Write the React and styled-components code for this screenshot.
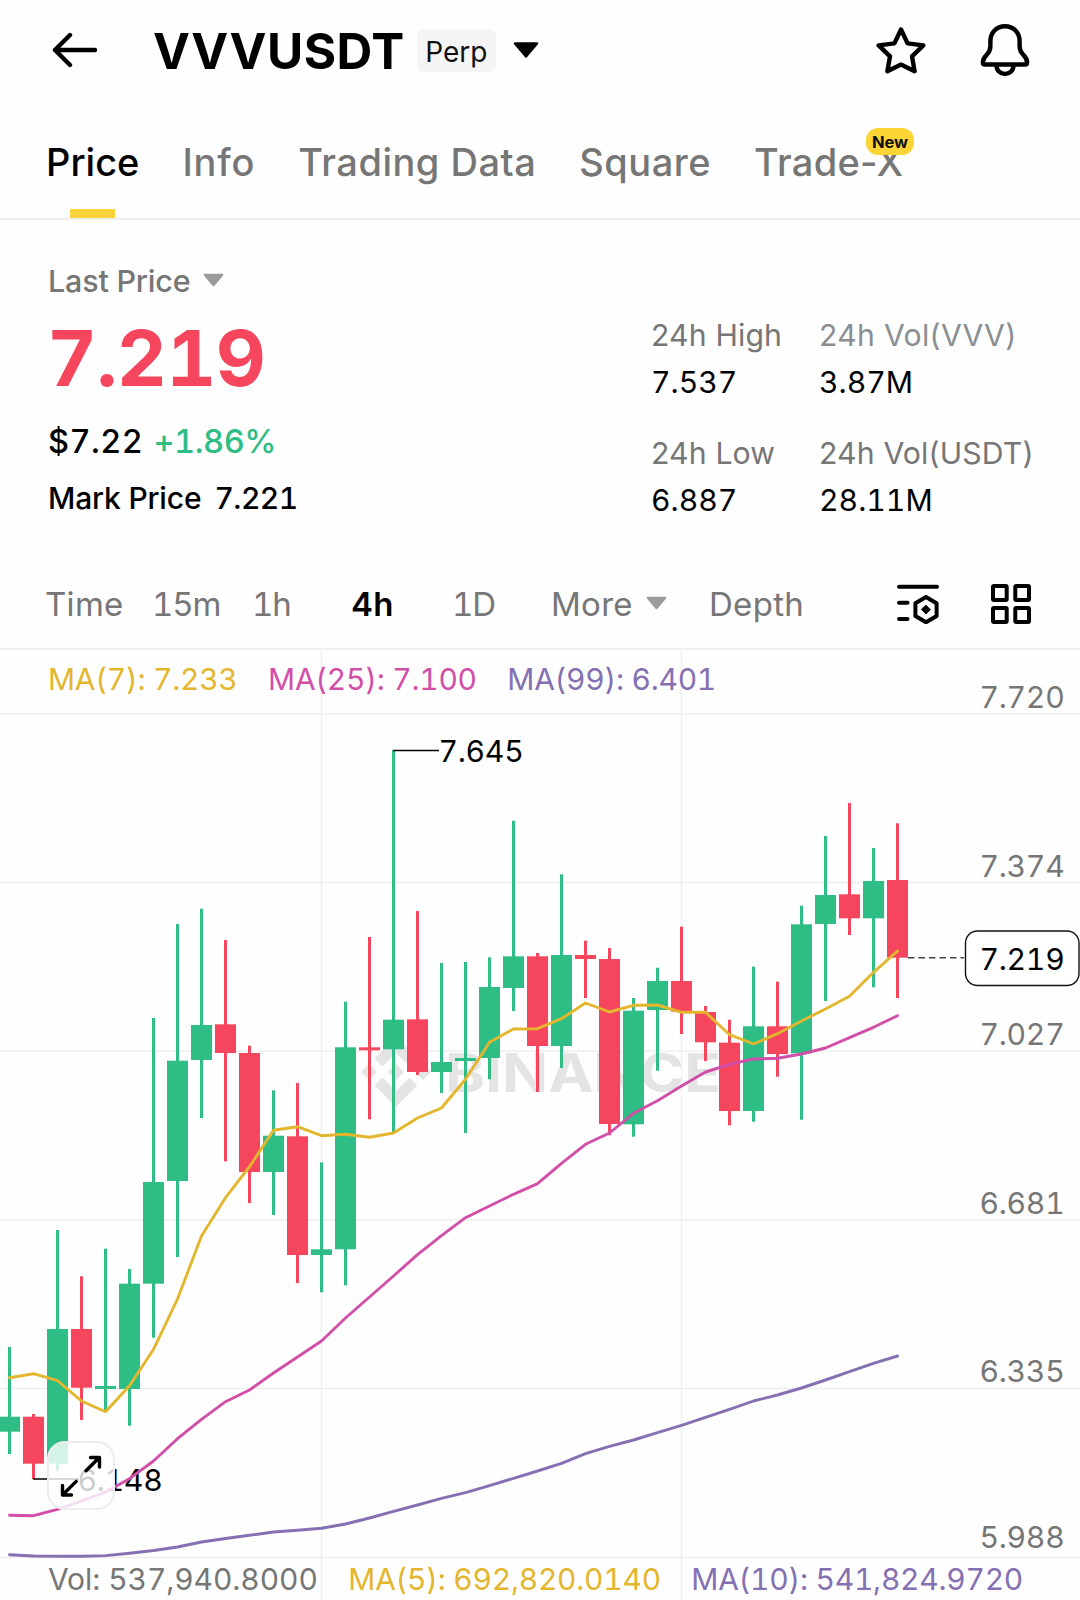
// Import necessary dependencies
import React, { useState } from "react";
import styled, { createGlobalStyle } from "styled-components";
import { SiBinance } from "react-icons/si";

const GlobalStyle = createGlobalStyle`
  * {
    box-sizing: border-box;
  }
  body {
    margin: 0;
    background: #fefefe;
    color: #000;
    font-family: Inter, "Liberation Sans", sans-serif;
    -webkit-font-smoothing: antialiased;
  }
  button {
    font: inherit;
    color: inherit;
    background: none;
    border: none;
    padding: 0;
  }
`;

const UP = "#2ebd85";
const DOWN = "#f6465d";
const YELLOW = "#e3b62e";
const PINK = "#d24fa9";
const PURPLE = "#8470b2";
const GREY = "#767676";

// Candles on the 4h chart: [up, high, body top, body bottom, low]
const candles = [
  [1, 1347, 1416.7, 1431.7, 1454],
  [0, 1414, 1416.7, 1463.7, 1479],
  [1, 1230, 1329, 1463.7, 1470.5],
  [0, 1276.3, 1329, 1387.7, 1420],
  [1, 1248.7, 1386, 1389, 1411.7],
  [1, 1269, 1283.7, 1389, 1425.7],
  [1, 1018, 1182, 1283.7, 1337.7],
  [1, 924, 1060.7, 1181, 1257],
  [1, 908.7, 1025, 1060, 1118],
  [0, 940, 1024.3, 1053, 1161.3],
  [0, 1045.7, 1053, 1172, 1203],
  [1, 1090.3, 1135.7, 1172, 1215],
  [0, 1083, 1136.3, 1255, 1283],
  [1, 1162.3, 1249.3, 1255, 1292.3],
  [1, 1001.7, 1047.3, 1249.3, 1285.3],
  [0, 937, 1047.3, 1050.3, 1119.3],
  [1, 750, 1019.7, 1049.3, 1132.3],
  [0, 911, 1019.3, 1072, 1075],
  [1, 963, 1062, 1072, 1093],
  [1, 962, 1058, 1061, 1133],
  [1, 957.3, 987, 1058, 1079.3],
  [1, 820.7, 956.3, 988, 1011],
  [0, 953, 956.3, 1046, 1092],
  [1, 874.3, 955, 1046, 1068],
  [0, 940.7, 955, 959, 998],
  [0, 948, 959, 1124, 1135.3],
  [1, 998, 1010.7, 1124.3, 1136.7],
  [1, 967.7, 981, 1010, 1070.7],
  [0, 926.7, 981, 1011.7, 1034],
  [0, 1006, 1012, 1042.3, 1061],
  [0, 1019.7, 1042.7, 1111, 1125.3],
  [1, 966.7, 1026.3, 1111, 1121.7],
  [0, 981.7, 1026.3, 1054, 1076.7],
  [1, 905.7, 924.3, 1053.3, 1119.7],
  [1, 836, 895, 924, 1001],
  [0, 803, 894.3, 918.3, 935],
  [1, 848, 881, 918.3, 987.3],
  [0, 823.3, 880, 957.7, 998],
];

const ma7 = [
  1377.7, 1373.7, 1380.7, 1401, 1411.7, 1385.7, 1349.3, 1299, 1236, 1197.7,
  1166.7, 1130.3, 1126.7, 1135.7, 1134.3, 1137.3, 1133, 1118, 1108, 1079.3,
  1042.3, 1029, 1028.7, 1018.7, 1003, 1012, 1005.3, 1005, 1012.3, 1012.3,
  1034.7, 1044, 1033.7, 1021, 1009, 996.3, 972.3, 951,
];

const ma25 = [
  1515.3, 1515.7, 1509.3, 1501, 1492, 1478.7, 1461, 1438.7, 1419.3, 1401.7,
  1390, 1373, 1357, 1341, 1318, 1297, 1276, 1254.7, 1235.7, 1217.7, 1206,
  1194.3, 1183.7, 1163.3, 1144.3, 1133, 1113.3, 1100.7, 1086, 1072, 1064.3,
  1059, 1058.3, 1054, 1048, 1037.7, 1027.3, 1015.7,
];

const ma99 = [
  1554.7, 1556, 1556.3, 1556.3, 1555.6, 1553.3, 1550.5, 1547, 1542, 1538.5,
  1535.3, 1532, 1530.3, 1528.3, 1524, 1518, 1511.3, 1505, 1498.3, 1492.7,
  1485.7, 1478.3, 1471, 1463.3, 1453.7, 1446.3, 1440, 1432.7, 1425.3, 1417.3,
  1409.3, 1401, 1395, 1388, 1380, 1371.7, 1363.3, 1356,
];

const gridLines = [714, 882.5, 1051, 1220, 1388.5, 1557.5];

// Axis label and its baseline
const axisLabels = [
  ["7.720", 708],
  ["7.374", 877],
  ["7.027", 1045],
  ["6.681", 1214],
  ["6.335", 1382],
  ["5.988", 1548],
];

const tabs = [
  { name: "Price", spacing: 0 },
  { name: "Info", spacing: 0.8 },
  { name: "Trading Data", spacing: 0.5 },
  { name: "Square", spacing: 0.5 },
  { name: "Trade-X", spacing: 0.3, badge: "New" },
];

const stats = [
  { label: "24h High", value: "7.537" },
  { label: "24h Vol(VVV)", value: "3.87M", soft: true },
  { label: "24h Low", value: "6.887" },
  { label: "24h Vol(USDT)", value: "28.11M" },
];

const intervals = ["Time", "15m", "1h", "4h", "1D", "More", "Depth"];

const candleX = (i) => 9.5 + i * 24;
const toPoints = (line) => line.map((y, i) => `${candleX(i)},${y}`).join(" ");

// Small rounded triangle used by the dropdowns
function Caret({ width, height, color }) {
  return (
    <svg width={width} height={height} viewBox="0 0 26 16">
      <path
        d="M2 1.5H24L13 14.5Z"
        fill={color}
        stroke={color}
        strokeWidth="2.4"
        strokeLinejoin="round"
      />
    </svg>
  );
}

function Header() {
  return (
    <HeaderStyled>
      <button className="back">
        <svg width="46" height="36" viewBox="0 0 46 36">
          <path d="M18 3L3 18L18 33M3 18H43" />
        </svg>
      </button>
      <h1>VVVUSDT</h1>
      <Tag>Perp</Tag>
      <Caret width={26} height={16} color="#000" />
      <div className="actions">
        <svg width="50" height="50" viewBox="875 25 50 50">
          <path d="M900 29.500L906.6 43.400L922.3 45.400L911 56.4L913.6 71.2L900 64.6L886.4 71.2L889 56.4L877.7 45.4L893.4 43.400Z" />
        </svg>
        <svg width="50" height="54" viewBox="979 23 50 54">
          <path d="M1004 26.2c-8.6 0-14.6 6.3-14.6 14.8v5c0 4-1 6.2-3.6 8.6c-3 3-3.9 5.2-3.9 7.8q0 2.1 2 2.1h40.2q2 0 2-2.1c0-2.6-.9-4.8-3.9-7.8c-2.600-2.4-3.600-4.6-3.600-8.6v-5c0-8.5-6-14.8-14.6-14.8z" />
          <path d="M995.6 66a8.4 8 0 0 0 16.8 0" />
        </svg>
      </div>
    </HeaderStyled>
  );
}

function Ticker() {
  return (
    <TickerStyled>
      <div className="summary">
        <div className="last">
          Last Price
          <Caret width={21} height={14} color="#9b9b9b" />
        </div>
        <div className="price">7.219</div>
        <div className="change">
          <span>$7.22</span>
          <Change>+1.86%</Change>
        </div>
        <div className="mark">
          <span>Mark Price</span>
          <span className="mark-value">7.221</span>
        </div>
      </div>
      <StatGrid>
        {stats.map((s) => (
          <Stat key={s.label} $soft={s.soft}>
            <dt>{s.label}</dt>
            <dd>{s.value}</dd>
          </Stat>
        ))}
      </StatGrid>
    </TickerStyled>
  );
}

// Bar with the chart intervals and the chart tools
function IntervalBar() {
  const [active, setActive] = useState("4h");
  return (
    <IntervalBarStyled>
      {intervals.map((name) => (
        <Interval
          key={name}
          $active={name === active}
          $numeric={name.startsWith("1")}
          onClick={() => setActive(name)}
        >
          {name}
          {name === "More" && <Caret width={21} height={14} color="#9b9b9b" />}
        </Interval>
      ))}
      <svg width="42" height="40" viewBox="897 584 42 40">
        <path d="M899 586.7H937M899 602.7H907.5M899 619H907.5" />
        <path d="M926 597L936.6 603.3V616L926 622.3L915.4 616V603.3Z" />
        <path d="M926 605.3L930.3 609.6L926 613.9L921.7 609.6Z" className="dot" />
      </svg>
      <svg width="40" height="40" viewBox="991 583 40 40">
        <rect x="993" y="585" width="13.7" height="14" rx="1" />
        <rect x="1015.3" y="585" width="13.7" height="14" rx="1" />
        <rect x="993" y="607" width="13.7" height="14" rx="1" />
        <rect x="1015.3" y="607" width="13.7" height="14" rx="1" />
      </svg>
    </IntervalBarStyled>
  );
}

function Chart() {
  return (
    <ChartStyled>
      <svg width="1080" height="950" viewBox="0 650 1080 950">
        {/* Grid */}
        <g stroke="#eeeeee" strokeWidth="1.6">
          {gridLines.map((y) => (
            <line key={y} x1="0" x2="1080" y1={y} y2={y} />
          ))}
          <line x1="321.5" x2="321.5" y1="650" y2="1600" strokeWidth="1.3" />
          <line x1="681.5" x2="681.5" y1="650" y2="1600" strokeWidth="1.3" />
        </g>

        {/* Watermark */}
        <g transform="translate(361 1037)">
          <SiBinance size={70} color="#e4e4e4" />
        </g>
        <Watermark
          x="445"
          y="1092"
          textLength="276"
          lengthAdjust="spacingAndGlyphs"
        >
          BINANCE
        </Watermark>

        {/* Candles */}
        {candles.map(([up, high, top, bottom, low], i) => (
          <g key={i} fill={up ? UP : DOWN}>
            <rect x={candleX(i) - 1.5} y={high} width="3" height={low - high} />
            <rect x={candleX(i) - 10.5} y={top} width="21" height={bottom - top} />
          </g>
        ))}

        {/* Highest and lowest price */}
        <path d="M393 750.5H439M33 1479H79" stroke="#000" strokeWidth="1.5" />
        <PriceText x="438.5" y="762">7.645</PriceText>
        <PriceText x="77.5" y="1491">6.148</PriceText>

        {/* Moving averages */}
        <MaLine points={toPoints(ma99)} stroke={PURPLE} />
        <MaLine points={toPoints(ma25)} stroke={PINK} />
        <MaLine points={toPoints(ma7)} stroke={YELLOW} />

        {/* Price axis */}
        {axisLabels.map(([label, y]) => (
          <PriceText key={label} x="979.5" y={y} fill={GREY}>
            {label}
          </PriceText>
        ))}

        {/* Current price */}
        <line
          x1="908"
          x2="964"
          y1="957.7"
          y2="957.7"
          stroke="#444"
          strokeWidth="1.6"
          strokeDasharray="6.5 4"
        />
        <rect
          x="965.5"
          y="931"
          width="113.5"
          height="54.5"
          rx="12"
          fill="#fff"
          stroke="#111"
          strokeWidth="1.4"
        />
        <PriceText x="979.5" y="970">7.219</PriceText>
      </svg>

      <Legend $top={9}>
        <Value $color={YELLOW}>MA(7): 7.233</Value>
        <Value $color={PINK}>MA(25): 7.100</Value>
        <Value $color={PURPLE}>MA(99): 6.401</Value>
      </Legend>
      <Legend $top={909}>
        <Value $color={GREY} $spacing={-0.08}>Vol: 537,940.8000</Value>
        <Value $color={YELLOW}>MA(5): 692,820.0140</Value>
        <Value $color={PURPLE}>MA(10): 541,824.9720</Value>
      </Legend>

      <ExpandButton aria-label="Expand">
        <svg width="42" height="42" viewBox="60 1455 42 42">
          <path d="M86 1470.7L99 1457.8M90.5 1457.5H99.5V1467" />
          <path d="M76.2 1481.4L63 1494.5M62.500 1485.5V1495H71.5" />
        </svg>
      </ExpandButton>
    </ChartStyled>
  );
}

export default function App() {
  const [tab, setTab] = useState("Price");
  return (
    <Page>
      <GlobalStyle />
      <Header />
      <Tabs>
        {tabs.map((t) => (
          <Tab
            key={t.name}
            $active={t.name === tab}
            $spacing={t.spacing}
            onClick={() => setTab(t.name)}
          >
            {t.name}
            {t.badge && <Badge>{t.badge}</Badge>}
          </Tab>
        ))}
      </Tabs>
      <Ticker />
      <IntervalBar />
      <Chart />
    </Page>
  );
}

const Page = styled.div`
  width: 1080px;
  height: 1600px;
  display: flex;
  flex-direction: column;
  overflow: hidden;
`;

const HeaderStyled = styled.header`
  height: 100px;
  padding: 0 50px 0 52px;
  display: flex;
  align-items: center;

  .back svg {
    display: block;
  }
  .back path,
  .actions path {
    fill: none;
    stroke: #000;
    stroke-width: 4.4;
    stroke-linecap: round;
    stroke-linejoin: round;
  }
  h1 {
    margin: 2px 12px 0 55px;
    font-size: 49.5px;
    font-weight: 700;
    line-height: 60px;
    letter-spacing: 0.53px;
  }
  .actions {
    margin-left: auto;
    display: flex;
    align-items: center;
    gap: 54px;
  }
`;

const Tag = styled.span`
  width: 79px;
  height: 43px;
  margin-right: 17px;
  padding-top: 2px;
  border-radius: 6px;
  background: #f5f5f5;
  color: #111;
  font-size: 28px;
  line-height: 42px;
  text-align: center;
`;

const Tabs = styled.nav`
  height: 120px;
  padding-left: 46px;
  display: flex;
  gap: 43px;
  border-bottom: 2px solid #eee;
`;

const Tab = styled.button`
  position: relative;
  height: 118px;
  padding-top: 6px;
  font-size: 38px;
  font-weight: 500;
  letter-spacing: ${(p) => p.$spacing}px;
  color: ${(p) => (p.$active ? "#000" : GREY)};

  &::after {
    content: "";
    display: ${(p) => (p.$active ? "block" : "none")};
    position: absolute;
    left: 50%;
    bottom: 0;
    width: 45px;
    height: 9px;
    margin-left: -23px;
    background: #f8d33a;
  }
`;

const Badge = styled.span`
  position: absolute;
  top: 28px;
  left: 112px;
  width: 48px;
  height: 27px;
  border-radius: 12px;
  background: #fcd535;
  color: #111;
  font-size: 16.5px;
  font-weight: 700;
  line-height: 28px;
  letter-spacing: 0;
  text-align: center;
`;

const TickerStyled = styled.section`
  height: 340px;
  display: flex;
  justify-content: space-between;

  .summary {
    padding: 41px 0 0 48px;
    line-height: 40px;
  }
  .last {
    display: flex;
    align-items: center;
    gap: 13px;
    color: ${GREY};
    font-size: 30.5px;
    font-weight: 450;
    letter-spacing: -0.2px;

    svg {
      margin-top: -2px;
    }
  }
  .price {
    margin-top: 17px;
    margin-left: -1px;
    color: ${DOWN};
    font-size: 77.5px;
    font-weight: 700;
    line-height: 80px;
    font-variant-numeric: tabular-nums;
    letter-spacing: -0.6px;
  }
  .change {
    display: flex;
    gap: 10px;
    margin-top: 24px;
    font-size: 32.5px;
    font-weight: 500;
    font-variant-numeric: tabular-nums;
    letter-spacing: 0.5px;
  }
  .mark {
    display: flex;
    gap: 13px;
    margin-top: 16px;
    font-size: 30px;
    font-weight: 500;
    letter-spacing: -0.16px;
  }
  .mark-value {
    font-variant-numeric: tabular-nums;
    letter-spacing: -0.5px;
  }
`;

const Change = styled.span`
  color: ${UP};
  letter-spacing: -0.4px;
`;

const StatGrid = styled.dl`
  width: 429px;
  margin: 0;
  padding-top: 95px;
  display: grid;
  grid-template-columns: 168px 1fr;
  grid-auto-rows: 87px;
  row-gap: 31px;
`;

const Stat = styled.div`
  display: flex;
  flex-direction: column;
  gap: 7px;
  font-size: 30.2px;
  line-height: 40px;
  white-space: nowrap;

  dt {
    color: ${(p) => (p.$soft ? "#8a8e93" : GREY)};
    letter-spacing: ${(p) => (p.$soft ? 0.3 : 0.15)}px;
  }
  dd {
    margin: 0;
    font-variant-numeric: tabular-nums;
  }
`;

const IntervalBarStyled = styled.div`
  height: 90px;
  padding-left: 45px;
  display: grid;
  grid-template-columns: 107px 100px 99px 101px 99px 158px 188px 94px 1fr;
  align-items: center;
  border-bottom: 2px solid #f0f0f0;

  > svg {
    fill: none;
    stroke: #000;
    stroke-width: 4;
    stroke-linecap: round;
    stroke-linejoin: round;
  }
  .dot {
    fill: #000;
    stroke-width: 1;
  }
`;

const Interval = styled.button`
  display: flex;
  align-items: center;
  gap: 13px;
  font-size: 33px;
  line-height: 44px;
  font-weight: ${(p) => (p.$active ? 600 : 400)};
  font-variant-numeric: ${(p) => (p.$numeric ? "tabular-nums" : "normal")};
  color: ${(p) => (p.$active ? "#000" : GREY)};
  letter-spacing: ${(p) => (p.$numeric ? -1.2 : 0.3)}px;

  svg {
    margin-top: -2px;
  }
`;

const ChartStyled = styled.section`
  position: relative;
  height: 950px;

  > svg {
    display: block;
  }
`;

const Watermark = styled.text`
  fill: #e4e4e4;
  font-size: 53px;
  font-weight: 700;
`;

const PriceText = styled.text`
  font-size: 30.2px;
  font-variant-numeric: tabular-nums;
  letter-spacing: -0.3px;
`;

const MaLine = styled.polyline`
  fill: none;
  stroke-width: 2.9;
  stroke-linejoin: round;
  stroke-linecap: round;
`;

const Legend = styled.div`
  position: absolute;
  top: ${(p) => p.$top}px;
  left: 48px;
  display: flex;
  gap: 30.5px;
`;

const Value = styled.span`
  color: ${(p) => p.$color};
  font-size: 30px;
  line-height: 40px;
  font-variant-numeric: tabular-nums;
  letter-spacing: ${(p) => p.$spacing ?? -0.26}px;
  white-space: nowrap;
`;

const ExpandButton = styled.button`
  position: absolute;
  top: 791px;
  left: 47px;
  width: 68px;
  height: 69px;
  display: grid;
  place-items: center;
  border: 2px solid #ededed;
  border-radius: 18px;
  background: rgba(255, 255, 255, 0.8);

  path {
    fill: none;
    stroke: #000;
    stroke-width: 3.4;
    stroke-linecap: round;
    stroke-linejoin: round;
  }
`;
